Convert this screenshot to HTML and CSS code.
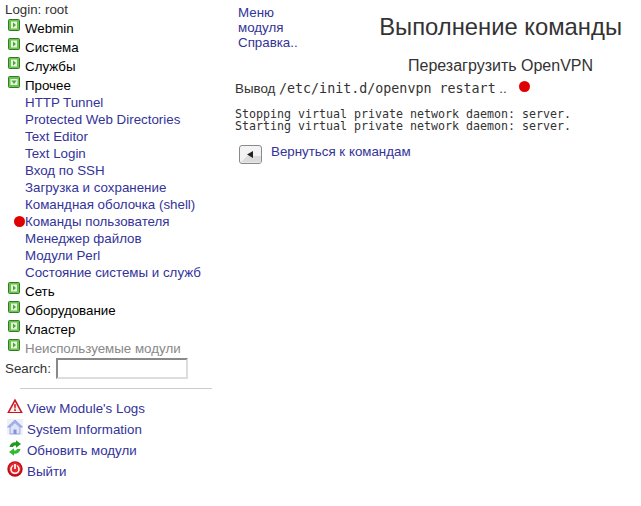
FILE: index.html
```html
<!DOCTYPE html>
<html lang="ru">
<head>
<meta charset="utf-8">
<title>Выполнение команды</title>
<link rel="stylesheet" href="styles.css">
</head>
<body>
<div class="page">
<nav class="side">
  <div class="login">Login: root</div>
  <div class="cat"><svg class="tog" viewBox="0 0 12 12"><use href="#closed"/></svg><span>Webmin</span></div>
  <div class="cat"><svg class="tog" viewBox="0 0 12 12"><use href="#closed"/></svg><span>Система</span></div>
  <div class="cat"><svg class="tog" viewBox="0 0 12 12"><use href="#closed"/></svg><span>Службы</span></div>
  <div class="cat"><svg class="tog" viewBox="0 0 12 12"><use href="#open"/></svg><span>Прочее</span></div>
  <ul class="leafs">
    <li><a href="#">HTTP Tunnel</a></li>
    <li><a href="#">Protected Web Directories</a></li>
    <li><a href="#">Text Editor</a></li>
    <li><a href="#">Text Login</a></li>
    <li><a href="#">Вход по SSH</a></li>
    <li><a href="#">Загрузка и сохранение</a></li>
    <li><a href="#">Командная оболочка (shell)</a></li>
    <li class="cur"><a href="#">Команды пользователя</a></li>
    <li><a href="#">Менеджер файлов</a></li>
    <li><a href="#">Модули Perl</a></li>
    <li><a href="#">Состояние системы и служб</a></li>
  </ul>
  <div class="cat"><svg class="tog" viewBox="0 0 12 12"><use href="#closed"/></svg><span>Сеть</span></div>
  <div class="cat"><svg class="tog" viewBox="0 0 12 12"><use href="#closed"/></svg><span>Оборудование</span></div>
  <div class="cat"><svg class="tog" viewBox="0 0 12 12"><use href="#closed"/></svg><span>Кластер</span></div>
  <div class="cat unused"><svg class="tog" viewBox="0 0 12 12"><use href="#closed"/></svg><span>Неиспользуемые модули</span></div>
  <div class="search"><label>Search:</label><input type="text"></div>
  <hr class="rule">
  <div class="act"><svg class="ico" viewBox="0 0 16 16"><path d="M8 .5 15.800 15H.2Z" fill="#c8161c"/><path d="M8 3.800 13.500 14H2.500Z" fill="#f8eeee"/><path d="M7.100 6.300h1.800l-.3 4.300H7.400ZM7.200 11.300h1.600v1.600H7.200Z" fill="#c8161c"/></svg><a href="#">View Module's Logs</a></div>
  <div class="act"><svg class="ico" viewBox="0 0 16 16"><rect width="16" height="16" fill="#eef0fa"/><path d="M8 1 15.500 8H13v7H3V8H.5Z" fill="#a4b0e6" stroke="#8492d6" stroke-width=".6"/><path d="M3.500 8.500 8 4.200l4.500 4.300V14.500h-9Z" fill="#dfe3f7"/><path d="M6.500 15v-4.500h3V15" fill="#8492d6"/></svg><a href="#">System Information</a></div>
  <div class="act"><svg class="ico" viewBox="0 0 16 16"><path d="M2.500 7C3 3.500 6 1.800 9 2.200V.3l5 3.700-5 3.700V5.500C7.300 5.300 6.500 5.800 6 7Z" fill="#1f9a1e"/><path d="M13.500 9C13 12.500 10 14.200 7 13.800v1.900L2 12l5-3.700v2.200c1.700.2 2.500-.3 3-1.500Z" fill="#35b832"/></svg><a href="#">Обновить модули</a></div>
  <div class="act"><svg class="ico" viewBox="0 0 16 16"><circle cx="8" cy="8" r="7.700" fill="#b80f14"/><circle cx="8" cy="7.500" r="6.200" fill="#e8262b"/><circle cx="8" cy="8.300" r="4" fill="none" stroke="#fff" stroke-width="1.600"/><path d="M8 2.500v5" stroke="#e8262b" stroke-width="3.600"/><path d="M8 3v5" stroke="#fff" stroke-width="1.700"/></svg><a href="#">Выйти</a></div>
</nav>
<main class="main">
  <header class="head">
    <div class="help"><a href="#">Меню<br>модуля</a><br><a href="#">Справка..</a></div>
    <h1>Выполнение команды</h1>
  </header>
  <h2>Перезагрузить OpenVPN</h2>
  <div class="out">Вывод <code>/etc/init.d/openvpn restart</code> .. <span class="dot"></span></div>
  <pre>Stopping virtual private network daemon: server.
Starting virtual private network daemon: server.</pre>
  <div class="back"><svg class="btn" viewBox="0 0 23 19"><rect x=".5" y=".5" width="22" height="18" rx="2.500" fill="#f3f3f3" stroke="#8a8a8a"/><path d="M1.500 17.500 8 11h14v6.500Z" fill="#dcdcdc"/><path d="M8 9.500 14 6v7Z" fill="#222"/></svg><a href="#">Вернуться к командам</a></div>
</main>
</div>
<svg class="defs" width="0" height="0">
  <defs>
    <g id="closed"><rect x=".5" y=".5" width="11" height="11" rx="1" fill="#6cc24a" stroke="#2f7d2a"/><rect x="3" y="2.500" width="6" height="7" fill="#e6f4dc"/><path d="M5 3.500 8 6 5 8.500Z" fill="#4aa63a"/></g>
    <g id="open"><rect x=".5" y=".5" width="11" height="11" rx="1" fill="#6cc24a" stroke="#2f7d2a"/><rect x="2.500" y="3" width="7" height="6" fill="#e6f4dc"/><path d="M3.500 4.500h5L6 8Z" fill="#4aa63a"/></g>
  </defs>
</svg>
</body>
</html>
```
FILE: styles.css
```css
html, body { margin: 0; padding: 0; background: #fff; }
body { font-family: "Liberation Sans", Arial, sans-serif; font-size: 13.33px; color: #333; }
a { color: #333399; text-decoration: none; }
.defs { position: absolute; }
.page { display: flex; align-items: flex-start; }
.side { width: 225px; flex: none; padding-top: 2px; }
.login { height: 16px; line-height: 15px; padding-left: 5px; }
.cat { display: flex; height: 19px; line-height: 19px; padding-left: 8px; color: #000; }
.cat span { margin-left: 5px; position: relative; top: 1px; }
.tog { width: 12px; height: 12px; margin-top: 1px; }
.unused { color: #888; }
.leafs { list-style: none; margin: 0; padding: 0 0 0 25px; }
.leafs li { height: 17px; line-height: 17px; position: relative; }
.cur::before { content: ""; position: absolute; left: -11px; top: 3px; width: 11px; height: 11px; border-radius: 50%; background: #e00000; }
.search { display: flex; align-items: center; height: 21px; padding: 1px 0 0 5px; box-sizing: border-box; }
.search input { width: 124px; height: 15px; margin: 0 0 0 5px; padding: 1px 2px; border: 2px inset #ddd; background: #fff; box-sizing: content-box; }
.rule { width: 192px; margin: 10px 0 9px 20px; border: 0; border-top: 1px solid #ccc; }
.act { display: flex; height: 21px; line-height: 21px; padding-left: 7px; }
.act a { margin-left: 4px; position: relative; top: 0; }
.ico { width: 16px; height: 16px; margin-top: 0; }
.main { flex: 1; min-width: 0; padding-left: 10px; }
.head { display: flex; justify-content: space-between; padding: 5px 19px 0 3px; }
.help { line-height: 15px; }
.head h1 { margin: 8px 0 0; font-size: 23.8px; line-height: 28px; font-weight: normal; color: #333; }
.main h2 { margin: 7px 0 0; padding-left: 173px; font-size: 16px; line-height: 18px; font-weight: normal; color: #333; }
.out { margin-top: 5px; height: 17px; line-height: 17px; }
code { font-family: "DejaVu Sans Mono", monospace; font-size: 13.33px; }
.dot { display: inline-block; width: 11px; height: 11px; border-radius: 50%; background: #e00000; margin: 0 0 1px 9px; }
pre { margin: 11px 0 0; font-family: "DejaVu Sans Mono", monospace; font-size: 11.64px; line-height: 12px; color: #333; }
.back { display: flex; gap: 9px; margin: 12px 0 0 4px; }
.btn { width: 23px; height: 19px; margin-top: 1px; }
.back a { line-height: 15px; }
```
